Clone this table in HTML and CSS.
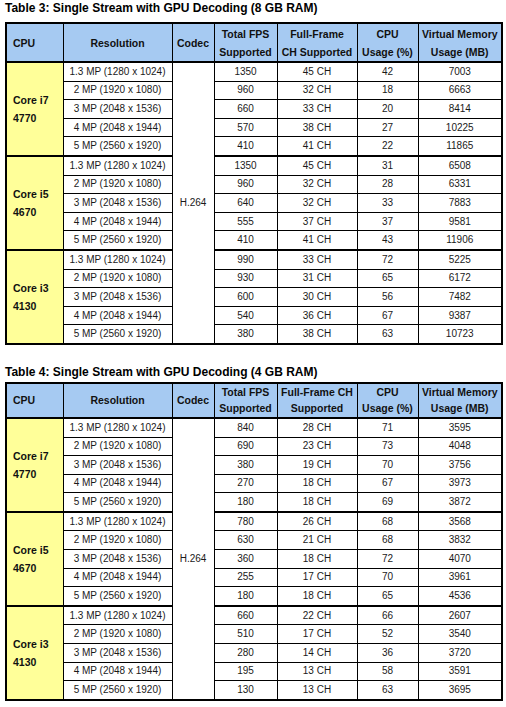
FILE: index.html
```html
<!DOCTYPE html>
<html>
<head>
<meta charset="utf-8">
<link rel="stylesheet" href="styles.css">
</head>
<body>
<div class="page">
<h2 class="title">Table 3: Single Stream with GPU Decoding (8 GB RAM)</h2>
<table class="perf t3">
<colgroup><col class="c-cpu"><col class="c-res"><col class="c-codec"><col class="c-fps"><col class="c-ch"><col class="c-use"><col class="c-mem"></colgroup>
<thead>
<tr><th class="left">CPU</th><th>Resolution</th><th>Codec</th><th>Total FPS<br>Supported</th><th>Full-Frame<br>CH Supported</th><th>CPU<br>Usage (%)</th><th>Virtual Memory<br>Usage (MB)</th></tr>
</thead>
<tbody>
<tr class="grp"><td class="cpu" rowspan="5">Core i7<br>4770</td><td>1.3 MP (1280 x 1024)</td><td class="codec" rowspan="15">H.264</td><td>1350</td><td>45 CH</td><td>42</td><td>7003</td></tr>
<tr><td>2 MP (1920 x 1080)</td><td>960</td><td>32 CH</td><td>18</td><td>6663</td></tr>
<tr><td>3 MP (2048 x 1536)</td><td>660</td><td>33 CH</td><td>20</td><td>8414</td></tr>
<tr><td>4 MP (2048 x 1944)</td><td>570</td><td>38 CH</td><td>27</td><td>10225</td></tr>
<tr><td>5 MP (2560 x 1920)</td><td>410</td><td>41 CH</td><td>22</td><td>11865</td></tr>
<tr class="grp"><td class="cpu" rowspan="5">Core i5<br>4670</td><td>1.3 MP (1280 x 1024)</td><td>1350</td><td>45 CH</td><td>31</td><td>6508</td></tr>
<tr><td>2 MP (1920 x 1080)</td><td>960</td><td>32 CH</td><td>28</td><td>6331</td></tr>
<tr><td>3 MP (2048 x 1536)</td><td>640</td><td>32 CH</td><td>33</td><td>7883</td></tr>
<tr><td>4 MP (2048 x 1944)</td><td>555</td><td>37 CH</td><td>37</td><td>9581</td></tr>
<tr><td>5 MP (2560 x 1920)</td><td>410</td><td>41 CH</td><td>43</td><td>11906</td></tr>
<tr class="grp"><td class="cpu" rowspan="5">Core i3<br>4130</td><td>1.3 MP (1280 x 1024)</td><td>990</td><td>33 CH</td><td>72</td><td>5225</td></tr>
<tr><td>2 MP (1920 x 1080)</td><td>930</td><td>31 CH</td><td>65</td><td>6172</td></tr>
<tr><td>3 MP (2048 x 1536)</td><td>600</td><td>30 CH</td><td>56</td><td>7482</td></tr>
<tr><td>4 MP (2048 x 1944)</td><td>540</td><td>36 CH</td><td>67</td><td>9387</td></tr>
<tr><td>5 MP (2560 x 1920)</td><td>380</td><td>38 CH</td><td>63</td><td>10723</td></tr>
</tbody>
</table>

<h2 class="title second">Table 4: Single Stream with GPU Decoding (4 GB RAM)</h2>
<table class="perf t4">
<colgroup><col class="c-cpu"><col class="c-res"><col class="c-codec"><col class="c-fps"><col class="c-ch"><col class="c-use"><col class="c-mem"></colgroup>
<thead>
<tr><th class="left">CPU</th><th>Resolution</th><th>Codec</th><th>Total FPS<br>Supported</th><th>Full-Frame CH<br>Supported</th><th>CPU<br>Usage (%)</th><th>Virtual Memory<br>Usage (MB)</th></tr>
</thead>
<tbody>
<tr class="grp"><td class="cpu" rowspan="5">Core i7<br>4770</td><td>1.3 MP (1280 x 1024)</td><td class="codec" rowspan="15">H.264</td><td>840</td><td>28 CH</td><td>71</td><td>3595</td></tr>
<tr><td>2 MP (1920 x 1080)</td><td>690</td><td>23 CH</td><td>73</td><td>4048</td></tr>
<tr><td>3 MP (2048 x 1536)</td><td>380</td><td>19 CH</td><td>70</td><td>3756</td></tr>
<tr><td>4 MP (2048 x 1944)</td><td>270</td><td>18 CH</td><td>67</td><td>3973</td></tr>
<tr><td>5 MP (2560 x 1920)</td><td>180</td><td>18 CH</td><td>69</td><td>3872</td></tr>
<tr class="grp"><td class="cpu" rowspan="5">Core i5<br>4670</td><td>1.3 MP (1280 x 1024)</td><td>780</td><td>26 CH</td><td>68</td><td>3568</td></tr>
<tr><td>2 MP (1920 x 1080)</td><td>630</td><td>21 CH</td><td>68</td><td>3832</td></tr>
<tr><td>3 MP (2048 x 1536)</td><td>360</td><td>18 CH</td><td>72</td><td>4070</td></tr>
<tr><td>4 MP (2048 x 1944)</td><td>255</td><td>17 CH</td><td>70</td><td>3961</td></tr>
<tr><td>5 MP (2560 x 1920)</td><td>180</td><td>18 CH</td><td>65</td><td>4536</td></tr>
<tr class="grp"><td class="cpu" rowspan="5">Core i3<br>4130</td><td>1.3 MP (1280 x 1024)</td><td>660</td><td>22 CH</td><td>66</td><td>2607</td></tr>
<tr><td>2 MP (1920 x 1080)</td><td>510</td><td>17 CH</td><td>52</td><td>3540</td></tr>
<tr><td>3 MP (2048 x 1536)</td><td>280</td><td>14 CH</td><td>36</td><td>3720</td></tr>
<tr><td>4 MP (2048 x 1944)</td><td>195</td><td>13 CH</td><td>58</td><td>3591</td></tr>
<tr><td>5 MP (2560 x 1920)</td><td>130</td><td>13 CH</td><td>63</td><td>3695</td></tr>
</tbody>
</table>
</div>
</body>
</html>
```
FILE: styles.css
```css
html, body {
  margin: 0;
  padding: 0;
  background: #fff;
}
body {
  font-family: "Liberation Sans", Arial, sans-serif;
  color: #1a1a1a;
}
.page {
  padding: 1px 5px 0 5px;
}
.title {
  margin: 0;
  font-size: 12px;
  font-weight: bold;
  line-height: 14px;
  color: #000;
}
.title.second {
  margin-top: 20px;
}
.perf {
  border-collapse: collapse;
  table-layout: fixed;
  width: 496px;
  margin-top: 7px;
  border: 2px solid #000;
  font-size: 10px;
}
.perf.t4 { margin-top: 3px; }
.c-cpu { width: 57px; }
.c-res { width: 109px; }
.c-codec { width: 42px; }
.c-fps { width: 63px; }
.c-ch { width: 80px; }
.c-use { width: 61px; }
.c-mem { width: 84px; }
.perf th {
  background: #a6caf2;
  font-weight: bold;
  font-size: 10.5px;
  line-height: 18px;
  height: 37px;
  padding: 0;
  border: 1px solid #000;
  border-bottom: 2px solid #000;
  text-align: center;
  color: #111;
}
.perf.t4 th {
  height: 33px;
  line-height: 16.5px;
}
.perf th.left {
  text-align: left;
  padding-left: 6px;
}
.perf td {
  border: 1px solid #000;
  height: 17.6px;
  padding: 0;
  text-align: center;
  line-height: 12px;
}
.perf tr.grp td {
  border-top: 2px solid #000;
}
.perf td.cpu {
  background: #ffff99;
  text-align: left;
  padding-left: 6px;
  font-weight: bold;
  font-size: 10.5px;
  line-height: 18px;
  color: #111;
}
.perf td.codec {
  vertical-align: middle;
}
```
